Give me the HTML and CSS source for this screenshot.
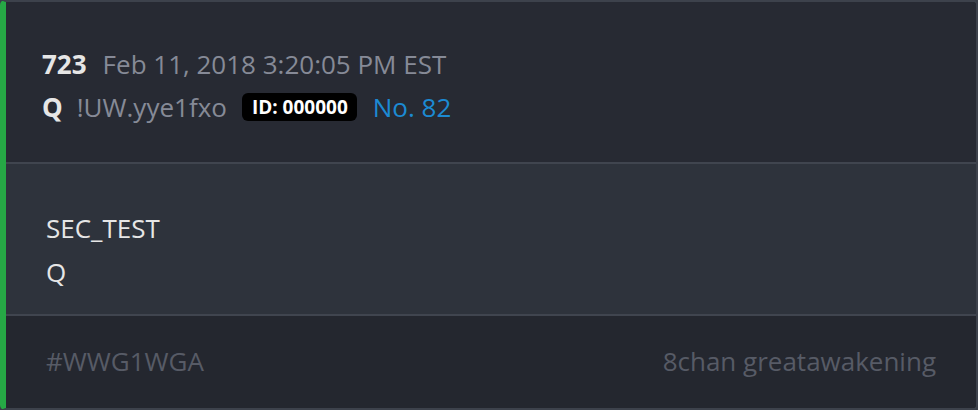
FILE: index.html
```html
<!DOCTYPE html>
<html>
<head>
<meta charset="utf-8">
<link rel="stylesheet" href="styles.css">
</head>
<body>
<div class="card">
  <div class="head">
    <div class="row">
      <span class="num">723</span>
      <span class="date">Feb 11, 2018 3:20:05 PM EST</span>
    </div>
    <div class="row">
      <span class="num q">Q</span>
      <span class="trip">!UW.yye1fxo</span>
      <span class="badge">ID: 000000</span>
      <span class="no">No. 82</span>
    </div>
  </div>
  <div class="body">
    <div class="line">SEC_TEST</div>
    <div class="line">Q</div>
  </div>
  <div class="foot">
    <span>#WWG1WGA</span>
    <span>8chan greatawakening</span>
  </div>
</div>
</body>
</html>
```
FILE: styles.css
```css
html, body {
  margin: 0;
  padding: 0;
  background: #3a3f48;
}
body {
  font-family: "Open Sans", "Noto Sans", sans-serif;
}
.card {
  box-sizing: border-box;
  width: 978px;
  height: 410px;
  border: 2px solid #3d424c;
  border-left: 6px solid #26a845;
  border-radius: 5px;
  overflow: hidden;
  display: flex;
  flex-direction: column;
  background: #272a33;
}
.head {
  height: 162px;
  box-sizing: border-box;
  padding: 40px 36px 0;
  background: #272a33;
  border-bottom: 2px solid #40454f;
}
.row {
  display: flex;
  align-items: center;
  height: 43px;
  font-size: 26px;
}
.num {
  color: #e6e6e6;
  font-weight: 700;
  margin-right: 16px;
}
.num.q { margin-right: 14px; }
.date, .trip {
  color: #868a97;
}
.trip { margin-right: 15px; }
.badge {
  background: #000;
  color: #fff;
  font-weight: 700;
  font-size: 19px;
  padding: 0 9px 0 10px;
  border-radius: 6px;
  height: 28px;
  line-height: 28px;
  margin-right: 16px;
}
.no { color: #1c8ad3; }
.body {
  height: 152px;
  box-sizing: border-box;
  padding: 42px 40px 0;
  background: #2e333c;
  border-bottom: 2px solid #40454f;
}
.line {
  color: #e6e6e6;
  font-size: 26px;
  height: 44px;
  line-height: 44px;
}
.foot {
  flex: 1;
  display: flex;
  justify-content: space-between;
  align-items: center;
  padding: 0 40px 2px;
  background: #24272f;
  color: #575b66;
  font-size: 26px;
}
```
